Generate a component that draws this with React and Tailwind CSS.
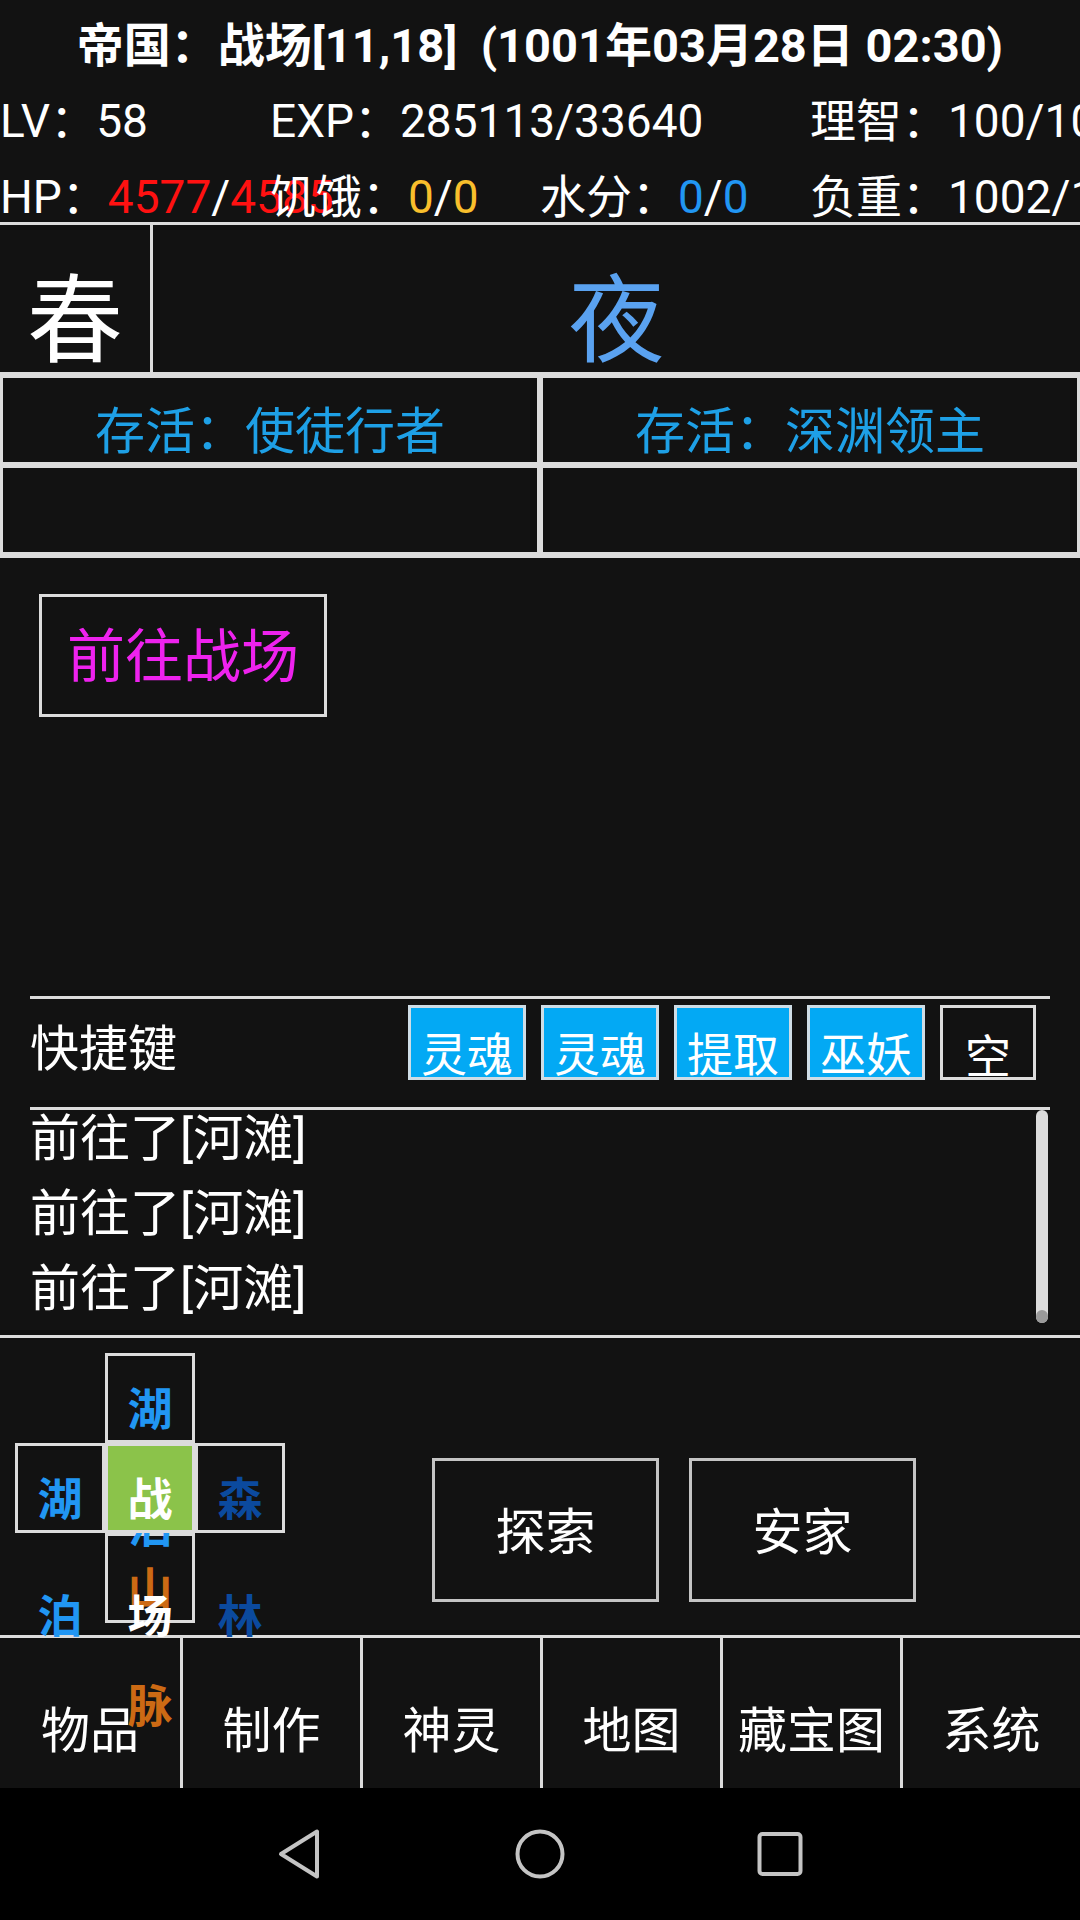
import React from 'react';

const Cell = ({ pos, chars, color, extra = '' }) => (
  <div className={`${pos} border-[3px] border-[#dcdcdc] text-[45px] font-bold leading-[117px] text-center ${color} ${extra}`}>
    <div className="-mt-[4px]">
      {chars.map((c, i) => (
        <div key={i}>{c}</div>
      ))}
    </div>
  </div>
);

export default function App() {
  const quick = ['灵魂', '灵魂', '提取', '巫妖'];
  const nav = ['物品', '制作', '神灵', '地图', '藏宝图', '系统'];
  return (
    <div className="w-[1080px] h-[1920px] overflow-hidden bg-[#121212] text-white font-[family-name:Roboto,'Noto_Sans_CJK_SC',sans-serif] flex flex-col">
      {/* title */}
      <div className="h-[80px] shrink-0 leading-[92px] text-[47px] font-bold text-center whitespace-pre">
        帝国：战场[11,18]  (1001年03月28日 02:30)
      </div>

      {/* stats */}
      <div className="grid grid-cols-4 grid-rows-[76px_66px] shrink-0 text-[46px] leading-[83px] whitespace-nowrap">
        <div>LV：58</div>
        <div className="col-span-2">EXP：285113/33640</div>
        <div>理智：100/100</div>
        <div>
          HP：<span className="text-[#ff1111]">4577</span>/<span className="text-[#ff1111]">4585</span>
        </div>
        <div>
          饥饿：<span className="text-[#f9bf2c]">0</span>/<span className="text-[#f9bf2c]">0</span>
        </div>
        <div>
          水分：<span className="text-[#2196f3]">0</span>/<span className="text-[#2196f3]">0</span>
        </div>
        <div>负重：1002/1200</div>
      </div>

      {/* season / time */}
      <div className="flex h-[153px] shrink-0 border-y-[3px] border-[#dcdcdc]">
        <div className="w-[153px] border-r-[3px] border-[#dcdcdc] text-[96px] leading-[193px] text-center">春</div>
        <div className="flex-1 text-[96px] leading-[193px] text-center text-[#5aa2f0]">夜</div>
      </div>

      {/* survival cells */}
      <div className="grid grid-cols-2 shrink-0 border-b-[3px] border-[#dcdcdc] text-[50px] leading-[108px] text-center text-[#1ea0e6]">
        <div className="h-[90px] border-[3px] border-[#dcdcdc]">存活：使徒行者</div>
        <div className="h-[90px] border-[3px] border-[#dcdcdc]">存活：深渊领主</div>
        <div className="h-[90px] border-[3px] border-[#dcdcdc]"></div>
        <div className="h-[90px] border-[3px] border-[#dcdcdc]"></div>
      </div>

      {/* action */}
      <div className="h-[438px] shrink-0 pt-[36px] pl-[39px]">
        <div className="w-[288px] h-[123px] border-[3px] border-[#dcdcdc] text-center text-[58px] leading-[120px] text-[#ee22ee]">
          前往战场
        </div>
      </div>

      {/* quick bar + log */}
      <div className="px-[30px] shrink-0">
        <div className="h-[114px] border-y-[3px] border-[#dcdcdc] flex">
          <div className="text-[49px] leading-[102px]">快捷键</div>
          <div className="ml-auto mr-[14px] mt-[6px] flex gap-[15px] self-start">
            {quick.map((q, i) => (
              <div
                key={i}
                className="w-[118px] h-[75px] border-[3px] border-[#cfdde6] bg-[#03a9f4] text-[46px] leading-[94px] text-center"
              >
                {q}
              </div>
            ))}
            <div className="w-[96px] h-[75px] border-[3px] border-[#dcdcdc] text-[46px] leading-[98px] text-center">空</div>
          </div>
        </div>
        <div className="h-[225px] overflow-hidden flex">
          <div className="flex-1 -mt-[8px] text-[50px] leading-[75px]">
            <div>前往了[河滩]</div>
            <div>前往了[河滩]</div>
            <div>前往了[河滩]</div>
          </div>
          <div className="w-[12px] h-[213px] mr-[2px] rounded-full bg-[#dcdcdc] flex flex-col justify-end">
            <div className="h-[13px] rounded-full bg-[#9a9a9a]"></div>
          </div>
        </div>
      </div>

      {/* map + buttons */}
      <div className="h-[300px] shrink-0 border-t-[3px] border-[#dcdcdc] flex relative z-10">
        <div className="ml-[15px] mt-[15px] self-start grid grid-cols-[90px_90px_90px] grid-rows-[90px_90px_90px]">
          <Cell pos="col-start-2 row-start-3" chars={['山', '脉']} color="text-[#cc6a14]" />
          <Cell pos="col-start-1 row-start-2" chars={['湖', '泊']} color="text-[#2196f3]" />
          <Cell pos="col-start-3 row-start-2" chars={['森', '林']} color="text-[#0b4a9e]" />
          <Cell pos="col-start-2 row-start-1" chars={['湖', '泊']} color="text-[#2196f3]" />
          <Cell pos="col-start-2 row-start-2" chars={['战', '场']} color="text-white" extra="bg-[#8bc34a]" />
        </div>
        <div className="ml-[147px] mt-[120px] flex gap-[30px] self-start">
          <div className="w-[227px] h-[144px] border-[3px] border-[#c4c4c4] text-[50px] leading-[144px] text-center">探索</div>
          <div className="w-[227px] h-[144px] border-[3px] border-[#c4c4c4] text-[50px] leading-[144px] text-center">安家</div>
        </div>
      </div>

      {/* bottom nav */}
      <div className="h-[153px] shrink-0 border-t-[3px] border-[#dcdcdc] grid grid-cols-6">
        {nav.map((n, i) => (
          <div
            key={i}
            className={`text-[49px] leading-[188px] text-center whitespace-nowrap ${i > 0 ? 'border-l-[3px] border-[#dcdcdc]' : ''}`}
          >
            {n}
          </div>
        ))}
      </div>

      {/* android nav bar */}
      <div className="h-[132px] shrink-0 bg-black flex items-center justify-center gap-[180px]">
        <svg width="60" height="60" viewBox="0 0 60 60">
          <path d="M11 30 L47 7.5 L47 52.5 Z" fill="none" stroke="#c4c4c4" strokeWidth="4" strokeLinejoin="round" />
        </svg>
        <svg width="60" height="60" viewBox="0 0 60 60">
          <circle cx="30" cy="30" r="22.5" fill="none" stroke="#c4c4c4" strokeWidth="4" />
        </svg>
        <svg width="60" height="60" viewBox="0 0 60 60">
          <rect x="9.5" y="10" width="41" height="40" rx="3" fill="none" stroke="#c4c4c4" strokeWidth="4" />
        </svg>
      </div>
    </div>
  );
}
